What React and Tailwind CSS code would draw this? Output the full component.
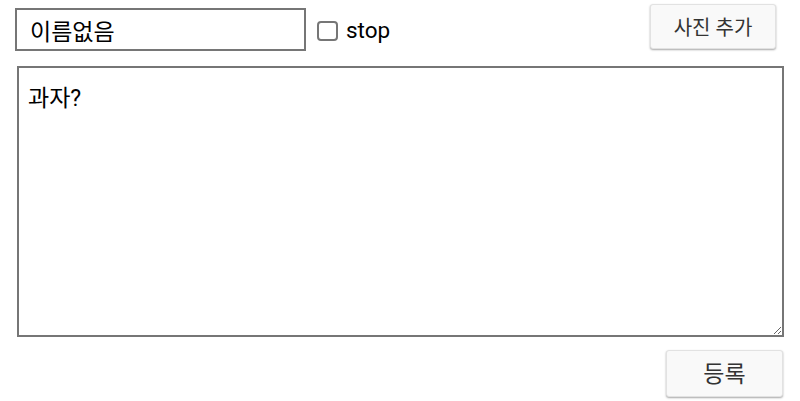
export default function App() {
  const font = { fontFamily: "Roboto, 'Noto Sans CJK KR', sans-serif" };
  return (
    <div className="w-[800px] h-[401px] bg-white text-black" style={font}>
      <div className="flex items-start pt-[4px] pl-[15px] pr-[24px] h-[62px]">
        <input
          defaultValue="이름없음"
          className="mt-[4px] w-[291px] h-[43px] border-2 border-[#767676] px-[13px] text-[23px] text-black outline-none"
          style={font}
        />
        <label className="flex items-center mt-[15px] ml-[11px]">
          <span className="w-[21px] h-[20px] rounded-[4px] border-2 border-[#767676] bg-white" />
          <span className="ml-[8px] text-[22.5px] leading-none pb-[2px]">stop</span>
        </label>
        <button
          className="ml-auto w-[126px] h-[45px] pt-[2px] rounded-[3px] border border-[#e2e2e2] bg-[#f9f9f9] shadow-[0_1px_2px_rgba(0,0,0,0.35)] text-[20px] text-[#333]"
          style={font}
        >
          사진 추가
        </button>
      </div>
      <div className="pl-[17px] pt-[4px]">
        <textarea
          defaultValue="과자?"
          className="block w-[767px] h-[271px] border-2 border-[#767676] px-[9px] pt-[17px] pb-[13px] text-[23px] leading-[28px] text-black outline-none"
          style={font}
        />
      </div>
      <div className="flex justify-end pr-[17px] pt-[13px]">
        <button
          className="w-[117px] h-[47px] pt-[4px] rounded-[3px] border border-[#e2e2e2] bg-[#f9f9f9] shadow-[0_1px_2px_rgba(0,0,0,0.35)] text-[23px] text-[#333]"
          style={font}
        >
          등록
        </button>
      </div>
    </div>
  );
}
